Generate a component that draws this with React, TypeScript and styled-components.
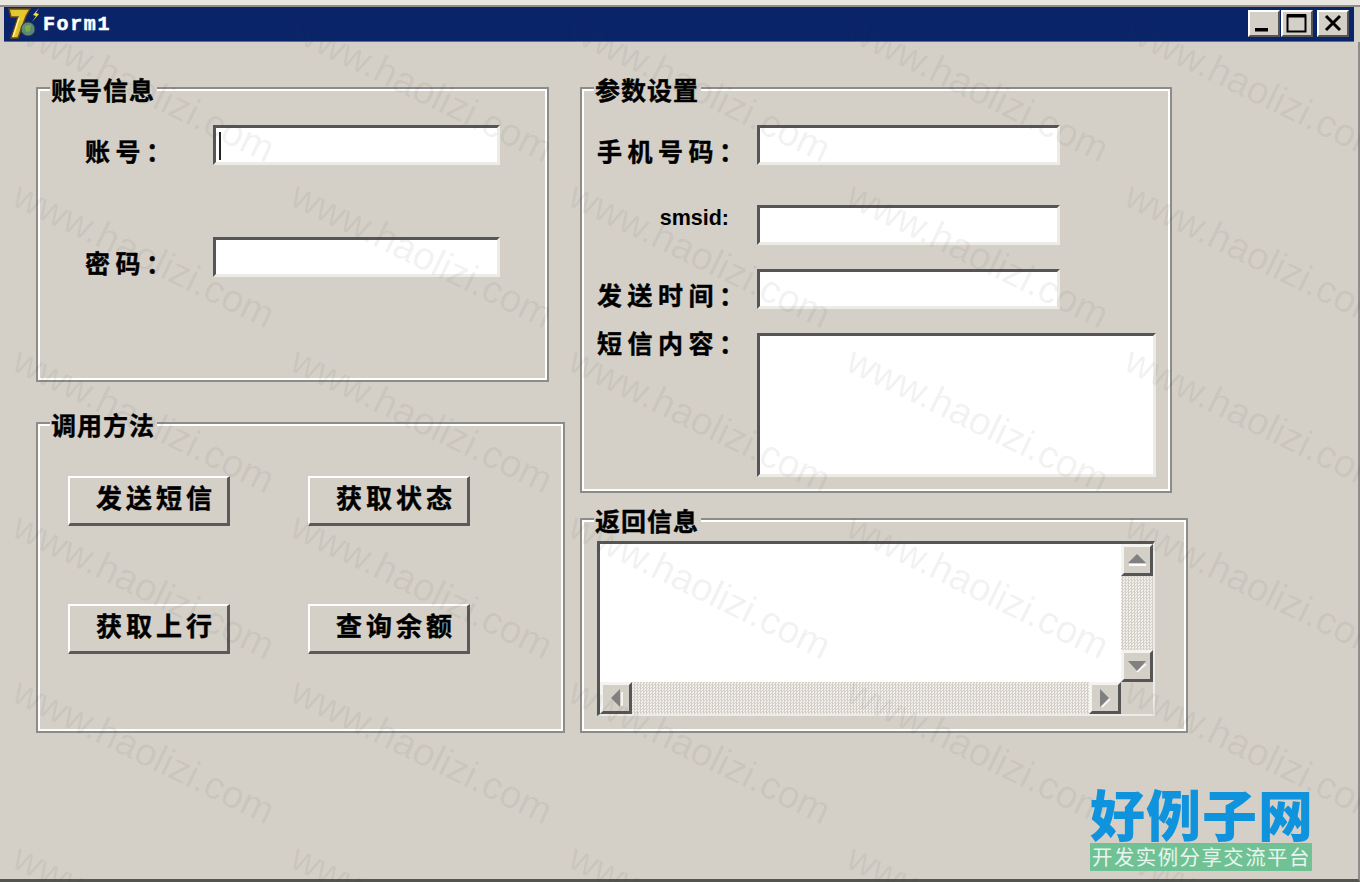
import React from "react";
import styled, { createGlobalStyle } from "styled-components";

const Global = createGlobalStyle`
  html, body { margin: 0; padding: 0; background: #d4d0c8; }
  * { box-sizing: border-box; }
`;

const cjk = `"Noto Sans CJK SC", "Liberation Sans", sans-serif`;

const Page = styled.div`
  position: relative;
  width: 1360px;
  height: 882px;
  overflow: hidden;
  background: #d4d0c8;
  display: flex;
  flex-direction: column;
`;
const TopEdge = styled.div`
  height: 7px;
  background: #e9e6e0;
  border-bottom: 2px solid #8f8e8a;
  flex: none;
`;
const TitleBar = styled.header`
  flex: none;
  height: 35px;
  margin: 0 6px 0 4px;
  background: #0a246a;
  border-bottom: 1px solid #5d6b8e;
  display: flex;
  align-items: center;
  padding: 0 5px 2px 2px;
`;
const AppIcon = styled.svg`
  width: 34px;
  height: 33px;
  flex: none;
`;
const TitleText = styled.span`
  font-family: "Liberation Mono", monospace;
  font-weight: 700;
  font-size: 20px;
  letter-spacing: 1.6px;
  color: #fff;
  margin: 2px 0 0 3px;
  -webkit-text-stroke: 0.5px #fff;
  flex: 1;
`;
const WinBtn = styled.button<{ $gap?: number }>`
  width: 32px;
  height: 27px;
  padding: 0;
  margin-left: ${(p) => p.$gap ?? 0}px;
  background: #d4d0c8;
  border: 2px solid;
  border-color: #fff #555 #555 #fff;
  display: flex;
  align-items: center;
  justify-content: center;
`;
const Body = styled.main`
  flex: 1;
  display: flex;
  gap: 15px;
  padding: 45px 0 0 36px;
  border-bottom: 3px solid #55554f;
  border-right: 2px solid #8f8e8a;
`;
const Column = styled.div<{ $gap: number }>`
  display: flex;
  flex-direction: column;
  align-items: flex-start;
  gap: ${(p) => p.$gap}px;
`;
const Group = styled.section<{ $w: number; $h: number }>`
  position: relative;
  width: ${(p) => p.$w}px;
  height: ${(p) => p.$h}px;
  border: 2px solid #8c8c88;
  box-shadow: inset 0 0 0 2px #fff;
`;
const Legend = styled.h2`
  position: absolute;
  top: -15px;
  left: 12px;
  margin: 0;
  padding: 0 2px 0 1px;
  background: #d4d0c8;
  font: 700 25px/30px ${cjk};
  letter-spacing: 1px;
  color: #000;
  -webkit-text-stroke: 0.4px #000;
  white-space: nowrap;
`;
const AccountGrid = styled.div`
  display: grid;
  grid-template-columns: 128px 287px;
  grid-template-rows: 40px 40px;
  row-gap: 72px;
  padding: 36px 0 0 47px;
`;
const ParamGrid = styled.div`
  display: grid;
  grid-template-columns: 160px 303px;
  grid-template-rows: 56px 40px 40px 144px;
  row-gap: 24px;
  padding: 36px 0 0 15px;
`;
const Label = styled.label<{ $top: number }>`
  align-self: start;
  margin-top: ${(p) => p.$top}px;
  font: 700 25px/30px ${cjk};
  letter-spacing: 5.5px;
  color: #000;
  -webkit-text-stroke: 0.4px #000;
  white-space: nowrap;
`;
const LatinLabel = styled.label`
  align-self: start;
  justify-self: end;
  margin: 0 28px 0 0;
  font: 700 21.5px/26px "Liberation Sans", sans-serif;
  color: #000;
`;
const Sunken = styled.div`
  background: #fff;
  border: 3px solid;
  border-color: #555 #ecebe6 #ecebe6 #555;
`;
const Field = styled(Sunken)<{ $caret?: boolean }>`
  position: relative;
  height: 40px;
  ${(p) =>
    p.$caret
      ? `&::after { content: ""; position: absolute; left: 3px; top: 4px; width: 2px; height: 28px; background: #222; }`
      : ""}
`;
const WideBox = styled(Sunken)`
  width: 399px;
  height: 144px;
`;
const ButtonGrid = styled.div`
  display: grid;
  grid-template-columns: 162px 162px;
  grid-auto-rows: 50px;
  column-gap: 78px;
  row-gap: 78px;
  padding: 52px 0 0 30px;
`;
const Btn = styled.button`
  background: #d4d0c8;
  border-style: solid;
  border-width: 2px 3px 3px 2px;
  border-color: #fff #5a5a58 #5a5a58 #fff;
  padding: 0 0 8px 15px;
  font: 700 26px/30px ${cjk};
  letter-spacing: 4px;
  color: #000;
  -webkit-text-stroke: 0.4px #000;
  white-space: nowrap;
`;
const MemoWrap = styled.div`
  padding: 21px 0 0 15px;
`;
const Memo = styled(Sunken)`
  width: 558px;
  height: 175px;
  display: grid;
  grid-template-columns: 1fr 32px;
  grid-template-rows: 1fr 32px;
  border-right-width: 2px;
  border-bottom-width: 2px;
`;
const MemoText = styled.div`
  background: #fff;
`;
const Track = styled.div<{ $dir: "v" | "h" }>`
  display: flex;
  flex-direction: ${(p) => (p.$dir === "v" ? "column" : "row")};
  justify-content: space-between;
  background-color: #fff;
  background-image: conic-gradient(#d4d0c8 25%, #f2f0ec 0 50%, #d4d0c8 0 75%, #f2f0ec 0);
  background-size: 3px 3px;
`;
const Corner = styled.div`
  background: #d4d0c8;
`;
const Arrow = styled.div<{ $w: number; $h: number }>`
  width: ${(p) => p.$w}px;
  height: ${(p) => p.$h}px;
  flex: none;
  background: #d4d0c8;
  border: 3px solid;
  border-color: #f4f3ef #555 #555 #f4f3ef;
  display: flex;
  align-items: center;
  justify-content: center;
`;
const WatermarkLayer = styled.div`
  position: absolute;
  top: 6px;
  left: 5px;
  display: grid;
  grid-template-columns: repeat(5, 278px);
  grid-auto-rows: 165.6px;
  pointer-events: none;
`;
const Mark = styled.span`
  display: flex;
  align-items: center;
  justify-content: center;
  white-space: nowrap;
  font: 400 38.6px/1 "Liberation Sans", sans-serif;
  color: rgba(60, 55, 50, 0.075);
  transform: rotate(26deg);
`;
const Logo = styled.aside`
  position: absolute;
  left: 1090px;
  top: 782px;
  width: 222px;
  display: flex;
  flex-direction: column;
  align-items: stretch;
`;
const LogoName = styled.div`
  font: 900 55px/60px ${cjk};
  color: #0f93dd;
  letter-spacing: 1px;
  white-space: nowrap;
`;
const LogoTag = styled.div`
  margin-top: 1px;
  height: 28px;
  background: #70c295;
  color: #e8f5ee;
  font: 400 20.4px/27px ${cjk};
  letter-spacing: 1.5px;
  white-space: nowrap;
  padding-left: 2px;
`;

const up = (
  <svg width="22" height="14" viewBox="0 0 22 14">
    <path d="M11 1 L20 10 H2 Z" fill="#808080" />
    <path d="M3 12 H20" stroke="#fff" strokeWidth="2" />
  </svg>
);
const down = (
  <svg width="22" height="14" viewBox="0 0 22 14">
    <path d="M2 2 H20 L11 12 Z" fill="#808080" />
    <path d="M11 13 L20 5" stroke="#fff" strokeWidth="1.5" />
  </svg>
);
const left = (
  <svg width="14" height="20" viewBox="0 0 14 20">
    <path d="M11 1 V19 L2 10 Z" fill="#808080" />
    <path d="M13 4 V18" stroke="#fff" strokeWidth="1.5" />
  </svg>
);
const right = (
  <svg width="14" height="20" viewBox="0 0 14 20">
    <path d="M2 1 V19 L11 10 Z" fill="#808080" />
    <path d="M4 19 L12 11" stroke="#fff" strokeWidth="1.5" />
  </svg>
);

export default function App() {
  return (
    <Page>
      <Global />
      <TopEdge />
      <TitleBar>
        <AppIcon viewBox="0 0 34 33">
          <path d="M3 2 H24 L20 9 L12 31 H5 L12 10 H5 Z" fill="#e3c92d" stroke="#6d4a10" strokeWidth="1.4" />
          <path d="M7 30 L13 11" stroke="#fff19a" strokeWidth="1.5" />
          <circle cx="22" cy="22" r="7" fill="#5f8a78" stroke="#2c3d4c" strokeWidth="1" />
          <path d="M19 19 L25 18 L24 24 L20 25 Z" fill="#7fb04d" />
          <path d="M33 1 L27 8 L30 9 L26 15 L33 7 L30 6 Z" fill="#f2e23a" />
        </AppIcon>
        <TitleText>Form1</TitleText>
        <WinBtn>
          <svg width="24" height="20" viewBox="0 0 24 20">
            <rect x="3" y="15" width="13" height="3.5" fill="#000" />
          </svg>
        </WinBtn>
        <WinBtn $gap={1}>
          <svg width="24" height="22" viewBox="0 0 24 22">
            <rect x="2.5" y="3.5" width="18" height="16" fill="none" stroke="#000" strokeWidth="2" />
            <rect x="2" y="2" width="19" height="3.5" fill="#000" />
          </svg>
        </WinBtn>
        <WinBtn $gap={4}>
          <svg width="22" height="20" viewBox="0 0 22 20">
            <path d="M4 3 L18 17 M18 3 L4 17" stroke="#000" strokeWidth="3" />
          </svg>
        </WinBtn>
      </TitleBar>
      <Body>
        <Column $gap={40}>
          <Group $w={513} $h={295}>
            <Legend>账号信息</Legend>
            <AccountGrid>
              <Label $top={10}>账号：</Label>
              <Field $caret />
              <Label $top={10}>密码：</Label>
              <Field />
            </AccountGrid>
          </Group>
          <Group $w={529} $h={311}>
            <Legend>调用方法</Legend>
            <ButtonGrid>
              <Btn>发送短信</Btn>
              <Btn>获取状态</Btn>
              <Btn>获取上行</Btn>
              <Btn>查询余额</Btn>
            </ButtonGrid>
          </Group>
        </Column>
        <Column $gap={25}>
          <Group $w={592} $h={406}>
            <Legend>参数设置</Legend>
            <ParamGrid>
              <Label $top={10}>手机号码：</Label>
              <Field />
              <LatinLabel>smsid:</LatinLabel>
              <Field />
              <Label $top={10}>发送时间：</Label>
              <Field />
              <Label $top={-6}>短信内容：</Label>
              <WideBox />
            </ParamGrid>
          </Group>
          <Group $w={608} $h={215}>
            <Legend>返回信息</Legend>
            <MemoWrap>
              <Memo>
                <MemoText />
                <Track $dir="v">
                  <Arrow $w={32} $h={32}>{up}</Arrow>
                  <Arrow $w={32} $h={32}>{down}</Arrow>
                </Track>
                <Track $dir="h">
                  <Arrow $w={32} $h={32}>{left}</Arrow>
                  <Arrow $w={32} $h={32}>{right}</Arrow>
                </Track>
                <Corner />
              </Memo>
            </MemoWrap>
          </Group>
        </Column>
      </Body>
      <WatermarkLayer>
        {Array.from({ length: 30 }, (_, i) => (
          <Mark key={i}>www.haolizi.com</Mark>
        ))}
      </WatermarkLayer>
      <Logo>
        <LogoName>好例子网</LogoName>
        <LogoTag>开发实例分享交流平台</LogoTag>
      </Logo>
    </Page>
  );
}
